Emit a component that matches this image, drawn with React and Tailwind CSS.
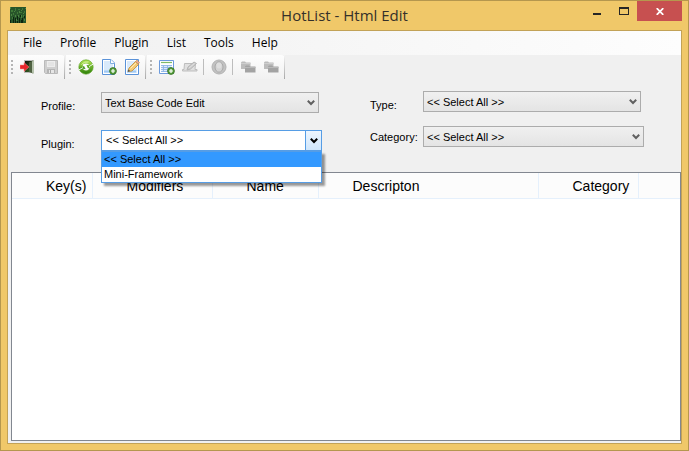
import React from "react";

const menus = ["File", "Profile", "Plugin", "List", "Tools", "Help"];

const columns = [
  { label: "Key(s)", width: "w-[80px]" },
  { label: "Modifiers", width: "w-[120px]" },
  { label: "Name", width: "w-[106px]" },
  { label: "Descripton", width: "w-[220px]" },
  { label: "Category", width: "w-[100px]" },
];

function Icon({ children }) {
  return (
    <svg width="16" height="16" viewBox="0 0 16 16" aria-hidden="true">
      {children}
    </svg>
  );
}

const leaf = "M1 3h2v2H1zM5 1h1v3H5zM8 2h2v1H8zM12 1h1v2h-1zM14 4h1v2h-1zM3 6h1v2H3zM7 5h1v2H7zM10 5h2v1h-2zM2 10h1v2H2zM13 8h1v2h-1z";

function AppIcon() {
  return (
    <Icon>
      <rect width="16" height="16" fill="#28552a" />
      <path fill="#3f7a38" d={leaf} />
      <path fill="#4b8540" d="M0 0h1v2H0zM4 4h1v1H4zM9 4h1v2H9zM11 3h1v1h-1zM13 6h1v1h-1zM5 8h1v2H5zM8 8h1v2H8zM11 8h1v3h-1zM1 7h1v2H1zM15 1h1v1h-1zM6 12h1v2H6zM14 12h1v2h-1z" />
      <path fill="#0c240f" d="M3 10h1v6H3zM5 11h1v5H5zM7 9h1v4H7zM9 11h1v5H9zM12 11h1v5h-1zM0 13h1v3H0zM10 8h1v2h-1zM14 9h1v2h-1zM7 14h1v2H7zM11 13h1v3h-1z" />
    </Icon>
  );
}

function ExitIcon() {
  return (
    <Icon>
      <defs>
        <linearGradient id="door" x2="1" y2="1">
          <stop offset="0" stopColor="#0c0f0b" />
          <stop offset="1" stopColor="#3f7a2b" />
        </linearGradient>
      </defs>
      <path d="M4.500 13.500v-12h9v12z" fill="url(#door)" stroke="#b9b9b9" />
      <path d="m9 3.500 4-2v13l-4-1.500z" fill="#4f6242" />
      <path d="M12 2.500 14 1v14l-2-1.500z" fill="#b7c3ae" />
      <path d="M0 6h4V3.500L9 8l-5 4.500V10H0z" fill="#e8262b" stroke="#f58b8b" strokeWidth=".5" />
    </Icon>
  );
}

function SaveIcon() {
  return (
    <Icon>
      <path d="M1.500 1.500h13v13h-12l-1-1z" fill="#cfcfcf" stroke="#bababa" />
      <path d="M4 2h8v6H4z" fill="#ededed" />
      <path d="M5 4h6M5 6h6" stroke="#dadada" />
      <path d="M4 10h8v4H4z" fill="#b4b4b4" />
      <path d="M6 11h5v3H6z" fill="#e6e6e6" />
      <path d="M7 11h1v3H7z" fill="#a8a8a8" />
    </Icon>
  );
}

function RefreshIcon() {
  return (
    <Icon>
      <defs>
        <linearGradient id="leafGreen" x2="0" y2="1">
          <stop offset="0" stopColor="#a6dc4c" />
          <stop offset="1" stopColor="#3a8a10" />
        </linearGradient>
      </defs>
      <circle cx="8" cy="8" r="5.300" fill="none" stroke="url(#leafGreen)" strokeWidth="3.800" />
      <circle cx="8" cy="8" r="7.200" fill="none" stroke="#59a022" strokeWidth=".6" />
      <path d="M5 5.500 9 5l-1 2 4 1-3 3z" fill="#fff" />
      <path d="M.8 9.500 6 7l1.500 3z" fill="#4c9a1c" />
      <path d="M15.200 6.500 10 9.500 8.500 6z" fill="#5da724" />
      <path d="M1 10.800 5 8.600M15 5.200l-4 2.500" stroke="#fff" strokeWidth=".9" />
      <path d="M3.500 5.500Q6.500 2 10.500 3" stroke="#ddf5a9" fill="none" />
    </Icon>
  );
}

function PlusBadge() {
  return (
    <>
      <circle cx="12" cy="12" r="3.400" fill="#57a03c" stroke="#356f22" strokeWidth=".8" />
      <path d="M12 10v4M10 12h4" stroke="#fff" strokeWidth="1.200" />
    </>
  );
}

function Page({ square }) {
  return (
    <>
      <path d={square ? "M1.500.5h13v15h-13z" : "M1.500.5h8.500l3.500 3.500v11.500h-12z"} fill="#fff" stroke="#5a92d8" />
      <path d={square ? "M3 2h10v12H3z" : "M3 2h6.500v3H12v9H3z"} fill="#d9eafb" />
      <path d="M3 12.500h9" stroke="#9fc9f5" strokeWidth="2" />
      {!square && <path d="M9.500.5v4h4" fill="#fff" stroke="#7fadde" />}
    </>
  );
}

function NewPageIcon() {
  return (
    <Icon>
      <Page />
      <PlusBadge />
    </Icon>
  );
}

function EditPageIcon() {
  return (
    <Icon>
      <Page square />
      <path d="M4 12.500 5 9l6.500-6.500 3 3-6.500 6.500z" fill="#f5cb74" stroke="#b88938" strokeWidth=".8" />
      <path d="M11.500 2.500 13 1l2.500 2.500-1.500 1.800z" fill="#e9a58f" stroke="#b88938" strokeWidth=".5" />
      <path d="M3.800 12.800 4.500 10.500l1.600 1.600z" fill="#444" />
      <path d="m6.500 9.500 5.500-5.500" stroke="#ffecb5" />
    </Icon>
  );
}

function NewSheetIcon() {
  return (
    <Icon>
      <path d="M.5 1.500h14v13H.5z" fill="#fff" stroke="#6d9bdc" />
      <path d="M2 3.500h11" stroke="#7dba68" strokeWidth="1.200" />
      <path d="M2.500 6h10v7h-10z" fill="#dceafa" />
      <path d="M2 6.500h11M2 8.500h11M2 10.500h11M2 12.500h8M4.500 6v7M8.500 6v7" fill="none" stroke="#8fb5e6" strokeWidth=".9" />
      <PlusBadge />
    </Icon>
  );
}

function EditKeyIcon() {
  return (
    <Icon>
      <path d="M2.500 4.500h11l-.5 6h2v1.500H.5v-1.500H2z" fill="#e0e0e0" stroke="#bdbdbd" />
      <path d="m5 11 1-3 6-5 2.500 1.500-6 5.500z" fill="#cbcbcb" stroke="#b5b5b5" />
      <path d="m7 9 5.500-4.500" stroke="#e2e2e2" />
    </Icon>
  );
}

function StopIcon() {
  return (
    <Icon>
      <circle cx="8" cy="8" r="7" fill="#c2c2c2" stroke="#b3b3b3" />
      <ellipse cx="8" cy="8" rx="4" ry="5.200" fill="#d3d3d3" stroke="#a9a9a9" />
      <ellipse cx="8" cy="6.500" rx="2.500" ry="3" fill="#dedede" />
    </Icon>
  );
}

function FoldersIcon() {
  return (
    <Icon>
      <path d="M1 3.500 2 2.500h3l1 1h4.500v6.500H1z" fill="#bcbcbc" />
      <path d="M1 4.500h9.500" stroke="#cecece" />
      <path d="M5 7.500 6 6.500h3l1 1h5.500V13.500H5z" fill="#a3a3a3" />
      <path d="M5 8.500h10.500" stroke="#b9b9b9" />
    </Icon>
  );
}

function ToolGroup({ label, children }) {
  return (
    <div role="toolbar" aria-label={label} className="mr-px flex h-6 items-center rounded-tr-sm bg-linear-to-b from-[#fdfdfd] to-[#f1f1f1]">
      <div className="flex w-2 flex-col gap-0.5 pl-[3px]">
        <i className="size-0.5 bg-[#b5b5b5]" />
        <i className="size-0.5 bg-[#b5b5b5]" />
        <i className="size-0.5 bg-[#b5b5b5]" />
        <i className="size-0.5 bg-[#b5b5b5]" />
      </div>
      {children}
      <div className="ml-0.5 h-full w-px bg-linear-to-b from-[#f5f5f5] to-[#a8a8a8]" />
    </div>
  );
}

function ToolButton({ label, disabled, children }) {
  return (
    <button type="button" aria-label={label} disabled={disabled} className="flex w-[23px] items-center justify-center">
      {children}
    </button>
  );
}

function Separator() {
  return <div className="mr-[3px] ml-0.5 h-4 w-px bg-[#bdbdbd]" />;
}

function Chevron({ className }) {
  return (
    <svg width="8" height="6" viewBox="0 0 8 6" className={className} aria-hidden="true">
      <path d="M.8.8 4 4 7.200.8" fill="none" stroke="currentColor" strokeWidth="2" />
    </svg>
  );
}

function Field({ id, label, value, labelWidth, width, labelPad = "pt-1.5", options, open }) {
  return (
    <div className="flex items-center">
      <label htmlFor={id} className={`${labelWidth} ${labelPad} shrink-0 text-[11px] leading-3`}>
        {label}
      </label>
      <div className={`relative ${width}`}>
        <select
          id={id}
          defaultValue={value}
          className={`block h-[21px] w-full appearance-none border pr-5 text-[11px] leading-4 outline-none ${
            open ? "border-[#569de5] bg-white pb-0.5 pl-1" : "border-[#acacac] bg-linear-to-b from-[#f0f0f0] to-[#e4e4e4] pl-[3px]"
          }`}
        >
          {options.map((o) => (
            <option key={o}>{o}</option>
          ))}
        </select>
        {open ? (
          <span className="pointer-events-none absolute inset-y-0 right-0 flex w-[17px] items-center justify-center border border-[#569de5] bg-linear-to-b from-[#eef6fe] to-[#cfe6fc]">
            <Chevron className="text-black" />
          </span>
        ) : (
          <Chevron className="pointer-events-none absolute top-2 right-1 text-[#606060]" />
        )}
        {open && (
          <ul
            role="listbox"
            aria-label="Plugin choices"
            className="absolute top-full left-0 z-10 w-full border border-[#569de5] bg-white text-[11px] leading-[15px] shadow-[3px_3px_2px_rgba(0,0,0,0.4)]"
          >
            {options.map((o) => (
              <li
                key={o}
                role="option"
                aria-selected={o === value}
                className={o === value ? "bg-[#3399ff] pl-0.5" : "pl-0.5"}
              >
                {o}
              </li>
            ))}
          </ul>
        )}
      </div>
    </div>
  );
}

export default function App() {
  return (
    <div className="flex h-screen flex-col border border-[#b5974e] bg-[#f0c869] px-1.5 pb-1.5 font-['Liberation_Sans',Arial,sans-serif] text-black">
      <header className="flex h-[29px] shrink-0 items-start">
        <div className="flex w-[104px] pt-1.5 pl-[3px]">
          <AppIcon />
        </div>
        <h1 className="flex-1 pt-0.5 text-center font-['Open_Sans',sans-serif] text-[15px] leading-6 text-[#35302a]">
          HotList - Html Edit
        </h1>
        <div className="flex h-5 w-[104px] justify-end">
          <button type="button" aria-label="Minimize" className="flex w-[27px] items-end justify-center pb-[6px]">
            <span className="h-0.5 w-2 bg-[#262626]" />
          </button>
          <button type="button" aria-label="Maximize" className="flex w-[27px] items-center justify-center">
            <span className="h-2 w-2.5 border border-t-2 border-[#262626]" />
          </button>
          <button type="button" aria-label="Close" className="flex w-[45px] items-center justify-center bg-[#c75050]">
            <svg width="8" height="7" viewBox="0 0 8 7" aria-hidden="true">
              <path d="m.7.2 6.600 6.600M7.300.2.7 6.800" stroke="#fff" strokeWidth="1.800" />
            </svg>
          </button>
        </div>
      </header>

      <main className="flex min-h-0 flex-1 flex-col border border-[#c2a257] bg-[#f0f0f0]">
        <nav aria-label="Main menu" className="flex h-6 shrink-0 items-center bg-linear-to-r from-[#f0f0f0] to-[#fdfdfd] pl-[15px] font-['Open_Sans',sans-serif] text-[12px]">
          <div className="flex gap-[18px]">
            {menus.map((m) => (
              <button key={m} type="button" className="leading-5">
                {m}
              </button>
            ))}
          </div>
        </nav>

        <div className="flex shrink-0">
          <ToolGroup label="File">
            <ToolButton label="Exit"><ExitIcon /></ToolButton>
            <ToolButton label="Save" disabled><SaveIcon /></ToolButton>
          </ToolGroup>
          <ToolGroup label="Profile">
            <ToolButton label="Refresh"><RefreshIcon /></ToolButton>
            <ToolButton label="New profile"><NewPageIcon /></ToolButton>
            <ToolButton label="Edit profile"><EditPageIcon /></ToolButton>
          </ToolGroup>
          <ToolGroup label="List">
            <ToolButton label="Add hot key"><NewSheetIcon /></ToolButton>
            <ToolButton label="Edit hot key" disabled><EditKeyIcon /></ToolButton>
            <Separator />
            <ToolButton label="Stop" disabled><StopIcon /></ToolButton>
            <Separator />
            <ToolButton label="Copy" disabled><FoldersIcon /></ToolButton>
            <ToolButton label="Move" disabled><FoldersIcon /></ToolButton>
          </ToolGroup>
        </div>

        <form className="flex shrink-0 items-start gap-12 pt-3 pb-[21px] pl-[33px]">
          <div className="flex flex-col gap-[17px] pt-px">
            <Field id="profile" label="Profile:" value="Text Base Code Edit" options={["Text Base Code Edit"]} labelWidth="w-[60px]" width="w-[218px]" />
            <Field id="plugin" label="Plugin:" value="<< Select All >>" options={["<< Select All >>", "Mini-Framework"]} labelWidth="w-[60px]" width="w-[221px]" open />
          </div>
          <div className="flex flex-col gap-[14px]">
            <Field id="type" label="Type:" value="<< Select All >>" options={["<< Select All >>"]} labelWidth="w-[53px]" width="w-[218px]" />
            <Field id="category" label="Category:" value="<< Select All >>" options={["<< Select All >>"]} labelWidth="w-[53px]" width="w-[221px]" labelPad="pt-0" />
          </div>
        </form>

        <section aria-label="Hot keys" className="mb-0.5 ml-[3px] min-h-0 flex-1 overflow-hidden border border-[#828790] bg-white">
          <table className="w-full table-fixed border-collapse">
            <thead>
              <tr className="h-[25px] border-b border-[#e5f0fc] bg-[#fcfcfc]">
                {columns.map((c) => (
                  <th key={c.label} scope="col" className={`${c.width} border-r border-[#e5f0fc] pt-0.5 pr-0 pl-[34px] text-left text-[14px] leading-5 font-normal`}>
                    {c.label}
                  </th>
                ))}
                <td />
              </tr>
            </thead>
          </table>
        </section>
      </main>
    </div>
  );
}
